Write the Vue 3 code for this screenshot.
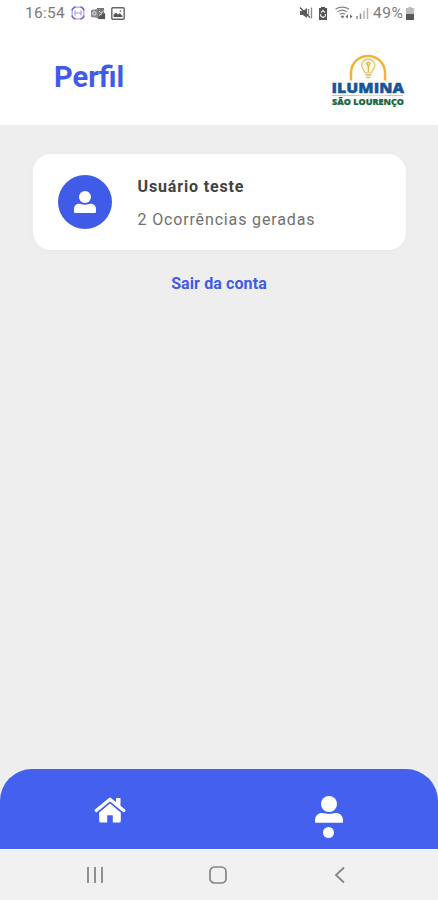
<script setup>
const user = { name: 'Usuário teste', reports: 2 }
</script>

<template>
  <div class="screen">
    <div class="status">
      <span class="time">16:54</span>
      <svg class="capture" width="14" height="14" viewBox="0 0 14 14">
        <rect x="1.2" y="1.2" width="11.6" height="11.6" rx="3.2" fill="none" stroke="#aaa4ed" stroke-width="1.2" />
        <path d="M1.2 4.5V3.5L3.5 1.2h1M9.5 1.2h1l2.3 2.3v1M12.8 9.5v1l-2.3 2.3h-1M4.5 12.8h-1l-2.3-2.3v-1" fill="none" stroke="#6a62d8" stroke-width="1.5" />
        <path d="M4 4.5v5M10 4.5v5M4.5 7h5" fill="none" stroke="#a29ceb" stroke-width="1.2" />
      </svg>
      <svg class="outlook" width="15" height="13" viewBox="0 0 15 13">
        <path d="M6 1h7v10H6z" fill="#777" />
        <path d="M0 3l7-1v9l-7-1z" fill="#888" />
        <circle cx="3.3" cy="6.4" r="1.7" fill="none" stroke="#eee" />
        <path d="M8 4.2l2.2 1.6 3.8-3M8 8.5l3-2M11 9l3-3v6H9z" fill="none" stroke="#ddd" />
        <path d="M9.5 8.5L14 6v6H7v-1z" fill="#555" />
      </svg>
      <svg class="photo" width="14" height="13" viewBox="0 0 14 13">
        <rect x=".8" y=".8" width="12.4" height="11.4" rx="1" fill="none" stroke="#666" stroke-width="1.4" />
        <path d="M2.5 10V8l2.3-2.5 2.2 2 1.8-1.2L11.5 9v1z" fill="#555" />
        <circle cx="9.5" cy="4" r="1" fill="#999" />
      </svg>
      <span class="spacer"></span>
      <svg class="mute" width="14" height="14" viewBox="0 0 14 14">
        <path d="M1 5h3l4-3v10L4 9H1z" fill="#5f5f5f" />
        <path d="M1 1.5l10 10" stroke="#555" stroke-width="1.4" />
        <path d="M9.5 3v6M12.5 1.5v11" stroke="#888" stroke-width="1.3" />
      </svg>
      <svg class="saver" width="10" height="13" viewBox="0 0 10 13">
        <path d="M3 0h4v1h2v12H1V1h2z" fill="#555" />
        <path d="M3 5.5l2-2 2 2M7.4 7v2L5 10.5 2.7 9V7" fill="none" stroke="#eee" stroke-width="1.1" />
      </svg>
      <svg class="wifi" width="18" height="14" viewBox="0 0 18 14">
        <g fill="none" stroke="#858585" stroke-width="1.2">
          <path d="M.5 3.3c4-3 9.500-3 13.500 0M2.600 5.900c2.800-2.200 6.600-2.200 9.400 0M4.800 8.400c1.600-1.300 3.600-1.300 5.200 0" />
        </g>
        <path d="M7.600 12.500L5.600 10.200q1.900-1.400 3.800 0z" fill="#777" />
        <path d="M10.500 10.500l2.500-2v4zM17.500 10.500l-2.500-2v4z" fill="#666" />
      </svg>
      <svg class="signal" width="13" height="12" viewBox="0 0 13 12">
        <path d="M1 9v3M4.5 6.5V12" stroke="#8b8b8b" stroke-width="1.5" />
        <path d="M8 4v8M11.5 1v11" stroke="#b4b4b4" stroke-width="1.5" />
      </svg>
      <span class="percent">49%</span>
      <svg class="battery" width="8" height="13" viewBox="0 0 8 13">
        <path d="M2.5 0h3v1H8v6H0V1h2.5z" fill="#bcbcbc" />
        <path d="M0 7h8v6H0z" fill="#585858" />
      </svg>
    </div>

    <header class="header">
      <h1>Perfil</h1>
      <svg class="logo" width="76" height="54" viewBox="0 0 76 54">
        <path d="M20 26.500V19a17 17 0 0 1 34 0v7.500" fill="none" stroke="#f0b537" stroke-width="2.500" />
        <path d="M34 18.800c-.3-2.600-3.300-3.700-3.300-7.200a6.600 6.600 0 0 1 13.200 0c0 3.500-3 4.600-3.300 7.200z" fill="#fffbe9" stroke="#e9c66c" stroke-width="1.300" />
        <path d="M37.300 18v-6l-1.800-2.400 1.800-1.600 1.800 1.600-1.800 2.400" fill="none" stroke="#deb23e" stroke-width="1.300" />
        <path d="M34.300 21h6M35.300 23.500h4" stroke="#d6bb6e" stroke-width="1.500" />
        <text class="brand" x="0.5" y="38.500" textLength="72.500" lengthAdjust="spacingAndGlyphs">ILUMINA</text>
        <path d="M1 41.500h27" stroke="#9bbfda" stroke-width=".8" />
        <path d="M28 41.500h26" stroke="#f4cf75" stroke-width=".8" />
        <path d="M54 41.500h18" stroke="#9bbfda" stroke-width=".8" />
        <text class="city" x="1" y="51.300" textLength="72" lengthAdjust="spacingAndGlyphs">SÃO LOURENÇO</text>
      </svg>
    </header>

    <main class="content">
      <section class="card">
        <div class="avatar">
          <svg width="22" height="22" viewBox="0 0 22 22" fill="#fff">
            <circle cx="11" cy="6" r="6" />
            <path d="M0 21v-2.600c0-3.500 2-5.600 5.300-5.600 2 0 2.800 1 5.700 1s3.700-1 5.700-1c3.300 0 5.300 2.100 5.300 5.600V21q0 1-1 1H1q-1 0-1-1z" />
          </svg>
        </div>
        <div class="details">
          <strong>{{ user.name }}</strong>
          <span>{{ user.reports }} Ocorrências geradas</span>
        </div>
      </section>
      <button class="logout">Sair da conta</button>
    </main>

    <nav class="tabs">
      <button class="tab" aria-label="Início">
        <svg width="32" height="26" viewBox="0 0 32 26">
          <path d="M22 1h4.300v10L22 7.500z" fill="#fff" />
          <path d="M16 6.300l10.800 9.200V24q0 1.500-1.500 1.500H18.800v-7.200h-5.600v7.200H6.700q-1.500 0-1.500-1.500v-8.500z" fill="#fff" />
          <path d="M2.500 13.800L16 2.600l13.500 11.200" fill="none" stroke="#4360ef" stroke-width="5.500" />
          <path d="M22 1h4.300v9L22 6.500z" fill="#fff" />
          <path d="M2.300 13.500L16 2.200l13.700 11.300" fill="none" stroke="#fff" stroke-width="3.300" stroke-linecap="round" stroke-linejoin="round" />
        </svg>
      </button>
      <button class="tab active" aria-label="Perfil">
        <svg width="28" height="28" viewBox="0 0 28 28" fill="#fff">
          <circle cx="14" cy="8" r="8" />
          <path d="M0 26v-1.500c0-5 3-7.500 7.500-7.500 2.200 0 3.500 1 6.500 1s4.300-1 6.500-1c4.500 0 7.500 2.500 7.500 7.500V26q0 .8-.8.8H.8q-.8 0-.8-.8z" />
        </svg>
        <span class="dot"></span>
      </button>
    </nav>

    <footer class="system">
      <svg width="18" height="18" viewBox="0 0 18 18">
        <path d="M2 1v16M9 1v16M16 1v16" stroke="#8c8c8c" stroke-width="1.900" />
      </svg>
      <svg width="18" height="18" viewBox="0 0 18 18">
        <rect x="1" y="1" width="16" height="16" rx="4.500" fill="none" stroke="#858585" stroke-width="1.700" />
      </svg>
      <svg width="18" height="18" viewBox="0 0 18 18">
        <path d="M13 1.500L5 9l8 7.500" fill="none" stroke="#858585" stroke-width="1.800" />
      </svg>
    </footer>
  </div>
</template>

<style>
body {
  margin: 0;
}
</style>

<style scoped>
.screen {
  display: flex;
  flex-direction: column;
  width: 438px;
  height: 900px;
  overflow: hidden;
  background: #eee;
  font-family: Roboto, "Liberation Sans", sans-serif;
}
svg {
  display: block;
  flex: none;
}
.status {
  display: flex;
  align-items: center;
  box-sizing: border-box;
  height: 26px;
  padding: 0 24px 0 25px;
  background: #fff;
  color: #7c7c7c;
  font-size: 15.5px;
}
.time {
  width: 46px;
  letter-spacing: 0.3px;
}
.outlook {
  margin-left: 6px;
}
.photo {
  margin-left: 5px;
}
.spacer {
  flex: 1;
}
.saver {
  margin-left: 5px;
}
.wifi {
  margin-left: 7px;
}
.signal {
  margin-left: 3px;
}
.percent {
  width: 33px;
  margin-left: 4px;
  letter-spacing: 0.5px;
  white-space: nowrap;
}
.header {
  display: flex;
  justify-content: space-between;
  box-sizing: border-box;
  height: 99px;
  padding: 28px 31px 0 54px;
  background: #fff;
}
h1 {
  margin: 6px 0 0;
  color: #405bea;
  font-size: 29px;
  line-height: 34px;
}
.brand {
  fill: #17559b;
  stroke: #17559b;
  stroke-width: 0.4px;
  font: 800 14.5px "Open Sans", sans-serif;
}
.city {
  fill: #17663f;
  stroke: #17663f;
  stroke-width: 0.2px;
  font: 800 8.2px "Open Sans", sans-serif;
}
.content {
  display: flex;
  flex: 1;
  flex-direction: column;
  align-items: center;
  padding-top: 29px;
}
.card {
  display: flex;
  align-items: flex-start;
  gap: 26px;
  box-sizing: border-box;
  width: 373px;
  height: 96px;
  padding: 21px 25px;
  border-radius: 18px;
  background: #fff;
  box-shadow: 0 2px 8px rgba(0, 0, 0, 0.025);
}
.avatar {
  display: flex;
  align-items: center;
  justify-content: center;
  width: 54px;
  height: 54px;
  border-radius: 50%;
  background: #405be8;
}
.details {
  display: flex;
  flex-direction: column;
  gap: 14px;
  padding-top: 2px;
  color: #707070;
  font-size: 16px;
  line-height: 19px;
  letter-spacing: 0.85px;
}
.details strong {
  color: #424242;
  font-weight: 700;
}
button {
  padding: 0;
  border: 0;
  background: none;
  font-family: inherit;
}
.logout {
  margin-top: 24px;
  color: #405be6;
  font-size: 16px;
  font-weight: 700;
  line-height: 19px;
  letter-spacing: 0.1px;
}
.tabs {
  display: flex;
  height: 80px;
  border-radius: 32px 32px 0 0;
  background: #4360ef;
}
.tab {
  display: flex;
  flex: 1;
  flex-direction: column;
  align-items: center;
  padding-top: 28px;
}
.tab.active {
  padding-top: 27px;
}
.dot {
  width: 11px;
  height: 11px;
  margin-top: 3px;
  border-radius: 50%;
  background: #fff;
}
.system {
  display: flex;
  align-items: center;
  justify-content: space-between;
  box-sizing: border-box;
  height: 51px;
  padding: 0 89px 0 86px;
  border-top: 1px solid #fafafa;
  background: #f1f1f1;
}
</style>
